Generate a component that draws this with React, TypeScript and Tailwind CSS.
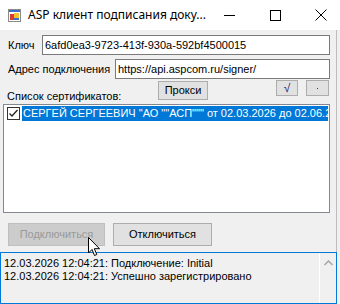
import React from "react";

const F = { fontFamily: '"Liberation Sans", Arial, sans-serif' };

function AppIcon() {
  return (
    <svg width="13" height="13" viewBox="0 0 13 13">
      <rect x="0.5" y="0.5" width="12" height="12" fill="#fff" stroke="#8a8a8a" />
      <rect x="1" y="1" width="11" height="2" fill="#3b6fc9" />
      <rect x="2" y="5" width="4" height="6" fill="#d93a2b" />
      <rect x="6" y="4" width="5" height="5" fill="#f2c233" />
      <rect x="6" y="9" width="5" height="2" fill="#3b6fc9" />
    </svg>
  );
}

export default function App() {
  return (
    <div className="w-[340px] h-[304px] bg-[#f0f0f0] overflow-hidden relative" style={F}>
      {/* title bar */}
      <div className="h-[30px] bg-white flex items-center">
        <div className="ml-[8px] mt-[1px] flex"><AppIcon /></div>
        <div className="ml-[7px] text-[12px] text-black whitespace-nowrap" style={{ fontFamily: '"Noto Sans", "Liberation Sans", sans-serif', fontSize: 12 }}>
          ASP клиент подписания доку...
        </div>
        <div className="ml-auto flex items-center h-full">
          <div className="w-[46px] h-full flex items-center justify-center">
            <div className="w-[11px] h-[1px] bg-black" />
          </div>
          <div className="w-[46px] h-full flex items-center justify-center">
            <div className="w-[11px] h-[11px] border border-black" />
          </div>
          <div className="w-[46px] h-full flex items-center justify-center mr-[3px]">
            <svg width="12" height="12" viewBox="0 0 12 12">
              <path d="M0.5 0.5 L11.5 11.5 M11.5 0.5 L0.5 11.5" stroke="#000" strokeWidth="1" />
            </svg>
          </div>
        </div>
      </div>

      {/* client area */}
      <div className="w-[337px] h-[274px] border-r border-[#bdbdbd] flex flex-col text-[11px] text-black">
        <div className="mt-[5px] h-[20px] flex items-center">
          <div className="w-[42px] pl-[8px] whitespace-nowrap">Ключ</div>
          <div className="w-[288px] h-[20px] bg-white border border-[#7a7a7a] flex items-center pl-[2px] whitespace-nowrap overflow-hidden">
            6afd0ea3-9723-413f-930a-592bf4500015
          </div>
        </div>
        <div className="mt-[4px] h-[20px] flex items-center">
          <div className="w-[115px] pl-[8px] whitespace-nowrap">Адрес подключения</div>
          <div className="w-[215px] h-[20px] bg-white border border-[#7a7a7a] flex items-center pl-[2px] whitespace-nowrap overflow-hidden">
            https://api.aspcom.ru/signer/
          </div>
        </div>
        <div className="mt-[1px] h-[23px] flex">
          <div className="w-[158px] pl-[7px] self-end leading-[13px] whitespace-nowrap">Список сертификатов:</div>
          <div className="mt-[1px] w-[50px] h-[19px] bg-[#e1e1e1] border border-[#adadad] flex items-center justify-center">Прокси</div>
          <div className="ml-[68px] w-[22px] h-[16px] bg-[#e1e1e1] border border-[#adadad] flex items-center justify-center text-[12px] text-[#1f1f6f]">√</div>
          <div className="ml-[8px] w-[23px] h-[16px] bg-[#e1e1e1] border border-[#adadad] flex items-center justify-center">
            <div className="w-[1px] h-[1px] bg-[#552255]" />
          </div>
        </div>
        <div className="mt-[1px] ml-[3px] w-[327px] h-[110px] bg-white border border-[#828790] p-[1px]">
          <div className="h-[15px] flex items-center">
            <div className="ml-[2px] w-[13px] h-[13px] border border-[#333] bg-white flex items-center justify-center">
              <svg width="11" height="11" viewBox="0 0 11 11">
                <path d="M1.5 5.5 L4 8 L9.5 2" stroke="#222" strokeWidth="1.3" fill="none" />
              </svg>
            </div>
            <div className="ml-[2px] flex-1 min-w-0 h-[15px] bg-[#0078d7] text-white whitespace-nowrap overflow-hidden flex items-center pl-[1px] text-[11px]">
              СЕРГЕЙ СЕРГЕЕВИЧ "АО ""АСП""" от 02.03.2026 до 02.06.2026
            </div>
          </div>
        </div>
        <div className="mt-[10px] h-[23px] flex">
          <div className="ml-[8px] w-[97px] h-[23px] bg-[#cccccc] border border-[#bfbfbf] text-[#9a9a9a] flex items-center justify-center">Подключиться</div>
          <div className="ml-[8px] w-[99px] h-[23px] bg-[#e1e1e1] border border-[#adadad] flex items-center justify-center">Отключиться</div>
        </div>
        <div className="mt-[6px] w-[337px] h-[53px] border border-[#0078d7] bg-[#f0f0f0] flex">
          <div className="flex-1 pl-[3px] pt-[4px] leading-[13px] text-[11px]">
            <div>12.03.2026 12:04:21: Подключение: Initial</div>
            <div>12.03.2026 12:04:21: Успешно зарегистрировано</div>
          </div>
          <div className="w-[1px] bg-white" />
          <div className="w-[16px] flex justify-center pt-[7px]">
            <svg width="9" height="6" viewBox="0 0 9 6">
              <path d="M0.5 5 L4.5 1 L8.5 5" stroke="#a6a6a6" strokeWidth="1.5" fill="none" />
            </svg>
          </div>
        </div>
      </div>

      {/* mouse cursor */}
      <div className="absolute left-[88px] top-[237px]">
        <svg width="13" height="20" viewBox="0 0 13 20">
          <path d="M0.5 0.5 L0.5 16 L4 12.5 L6.5 18.5 L8.8 17.5 L6.3 11.7 L11.5 11.7 Z" fill="#fff" stroke="#000" strokeWidth="1" />
        </svg>
      </div>
    </div>
  );
}
